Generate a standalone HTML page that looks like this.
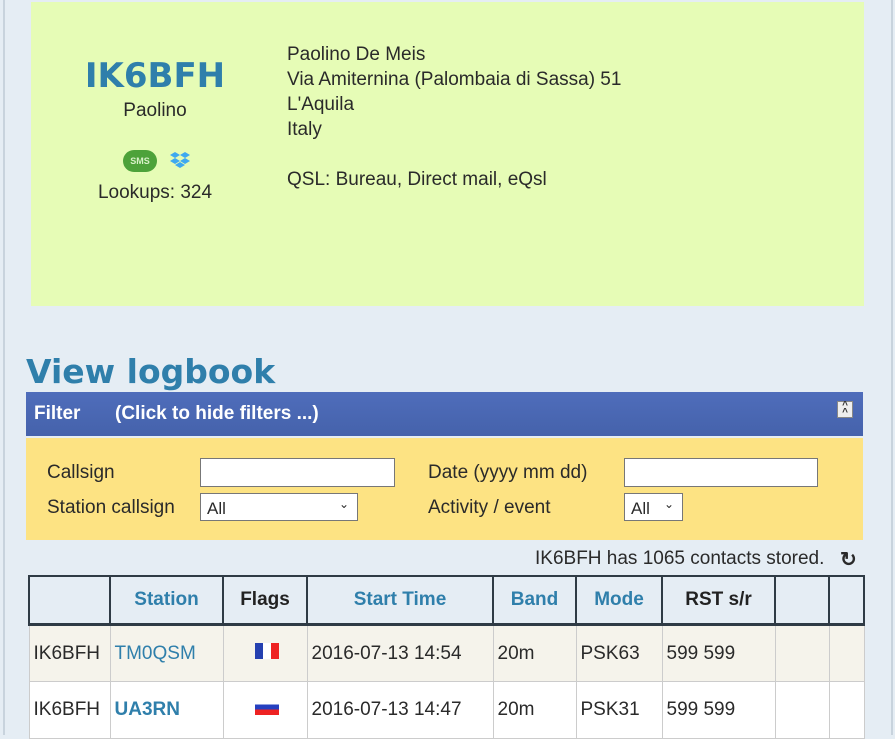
<!DOCTYPE html>
<html><head><style>
body{margin:0;width:895px;height:735px;overflow:hidden;background:#e5edf4;font-family:"Liberation Sans",Tahoma,sans-serif;color:#2a2a2a;position:relative}
.l{position:absolute;left:3px;top:0;width:2px;height:735px;background:#c8d3dd}
.r{position:absolute;left:891px;top:0;width:2px;height:735px;background:#c8d3dd}
.g{position:absolute;left:31px;top:2px;width:833px;height:304px;background:#e6fcb6}
.a{position:absolute;font-size:19px;line-height:25px}
h1{position:absolute;left:26px;top:352px;margin:0;font-size:33px;color:#2f7fab;font-family:"DejaVu Sans",sans-serif;font-weight:bold}
.bar{position:absolute;left:26px;top:392px;width:837px;height:44px;background:linear-gradient(#4f6dbb,#4562ab);color:#fff;font-weight:bold;font-size:19px}
.y{position:absolute;left:26px;top:438px;width:837px;height:102px;background:#fde383}
.lab{position:absolute;font-size:19px}
.in{position:absolute;background:#fff;border:1px solid #777;box-sizing:border-box}
table{position:absolute;left:28px;top:575px;border-collapse:collapse;font-size:19px;table-layout:fixed;width:835px}
td,th{border:1px solid #ccc;padding:0 0 0 4px;text-align:left;overflow:hidden;white-space:nowrap}
th{height:46px;background:#e5edf4;color:#2f7fab;text-align:center;border-bottom:3px solid #2f3b45;border-top:2px solid #2f3b45;border-left:2px solid #2f3b45;padding:0}
</style></head><body>
<div class="l"></div><div class="r"></div>
<div class="g"></div>
<div style="position:absolute;left:31px;width:248px;top:56px;text-align:center;font-family:'DejaVu Sans',sans-serif;font-weight:bold;font-size:34px;color:#2f7fab">IK6BFH</div>
<div class="a" style="left:31px;width:248px;text-align:center;top:98px">Paolino</div>
<div style="position:absolute;left:123px;top:150px;width:34px;height:22px;border-radius:11px;background:#4da23a;color:#d8f0c8;font-size:9px;text-align:center;line-height:22px;font-weight:bold">SMS</div>
<svg style="position:absolute;left:169px;top:151px" width="22" height="20" viewBox="0 0 22 20"><path d="M6 1l5 3-5 3-5-3zM16 1l5 3-5 3-5-3zM6 7l5 3-5 3-5-3zM16 7l5 3-5 3-5-3zM6 14l5-3 5 3-5 3z" fill="#3ea9f0"/></svg>
<div class="a" style="left:31px;width:248px;text-align:center;top:180px">Lookups: 324</div>
<div class="a" style="left:287px;top:42px">Paolino De Meis<br>Via Amiternina (Palombaia di Sassa) 51<br>L'Aquila<br>Italy<br><br>QSL: Bureau, Direct mail, eQsl</div>
<h1>View logbook</h1>
<div class="bar"><span style="position:absolute;left:8px;top:11px">Filter</span><span style="position:absolute;left:89px;top:11px">(Click to hide filters ...)</span>
<div style="position:absolute;left:811px;top:9px;width:14px;height:15px;background:#eee;border:1px solid #888;color:#333;font-size:10px;line-height:7px;text-align:center">^<br>^</div></div>
<div class="y"></div>
<div class="lab" style="left:47px;top:462px">Callsign</div>
<div class="lab" style="left:47px;top:497px">Station callsign</div>
<div class="lab" style="left:428px;top:462px">Date (yyyy mm dd)</div>
<div class="lab" style="left:428px;top:497px">Activity / event</div>
<div class="in" style="left:200px;top:458px;width:195px;height:29px"></div>
<div class="in" style="left:624px;top:458px;width:194px;height:29px"></div>
<div class="in" style="left:200px;top:493px;width:158px;height:28px;font-size:17px;padding:5px 0 0 6px">All<span style="position:absolute;right:8px;top:3px;font-size:12px">&#8964;</span></div>
<div class="in" style="left:624px;top:493px;width:59px;height:28px;font-size:17px;padding:5px 0 0 6px">All<span style="position:absolute;right:8px;top:3px;font-size:12px">&#8964;</span></div>
<div class="lab" style="left:535px;top:548px">IK6BFH has 1065 contacts stored.</div>
<div style="position:absolute;left:840px;top:547px;font-size:20px;font-weight:bold">&#8635;</div>
<table>
<colgroup><col style="width:81px"><col style="width:113px"><col style="width:84px"><col style="width:186px"><col style="width:83px"><col style="width:86px"><col style="width:113px"><col style="width:54px"><col style="width:35px"></colgroup>
<tr><th></th><th>Station</th><th style="color:#222">Flags</th><th>Start Time</th><th>Band</th><th>Mode</th><th style="color:#222">RST s/r</th><th></th><th style="border-right:2px solid #2f3b45"></th></tr>
<tr style="height:57px;background:#f5f3eb"><td>IK6BFH</td><td style="color:#2f7fab">TM0QSM</td><td style="text-align:center"><span style="display:inline-block;width:24px;height:16px;background:linear-gradient(90deg,#2540b0 33%,#fff 33% 66%,#e22 66%)"></span></td><td>2016-07-13 14:54</td><td>20m</td><td>PSK63</td><td>599 599</td><td></td><td></td></tr>
<tr style="height:57px;background:#fff"><td>IK6BFH</td><td style="color:#2f7fab;font-weight:bold">UA3RN</td><td style="text-align:center"><span style="display:inline-block;width:24px;height:16px;background:linear-gradient(#fff 33%,#2540c0 33% 66%,#e22 66%)"></span></td><td>2016-07-13 14:47</td><td>20m</td><td>PSK31</td><td>599 599</td><td></td><td></td></tr>
</table>
</body></html>
